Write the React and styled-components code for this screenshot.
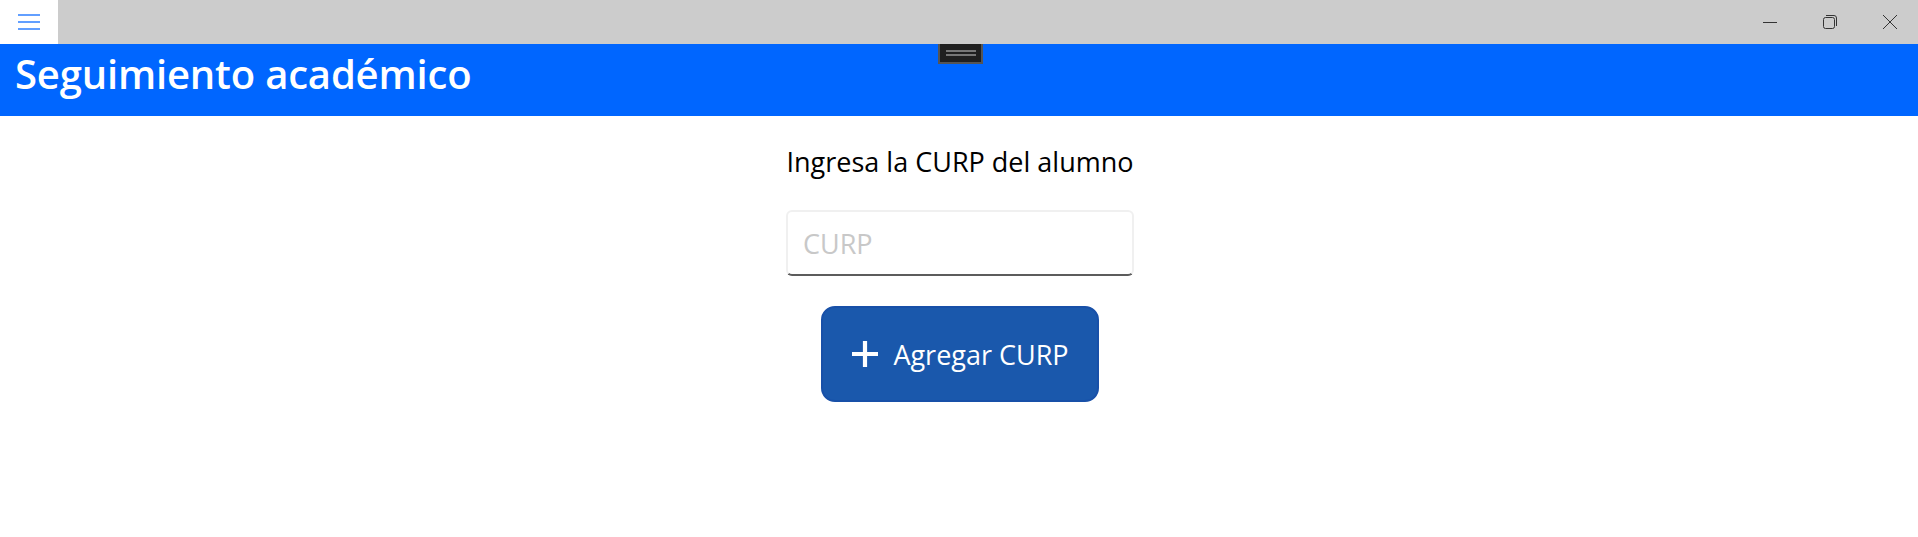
import React from "react";
import styled, { createGlobalStyle } from "styled-components";

const GlobalStyle = createGlobalStyle`
  html, body {
    margin: 0;
    padding: 0;
    background: #fff;
    font-family: "Open Sans", "Noto Sans", sans-serif;
  }
`;

export default function App() {
  return (
    <Page>
      <GlobalStyle />
      <TitleBar>
        <MenuButton aria-label="Menu">
          <svg width="22" height="16" viewBox="0 0 22 16">
            <path d="M0 1h22M0 8h22M0 15h22" stroke="#2f80ff" strokeWidth="1.5" fill="none" />
          </svg>
        </MenuButton>
        <WindowControls>
          <WindowButton aria-label="Minimizar">
            <svg width="16" height="16" viewBox="0 0 16 16">
              <path d="M1 8.5h14" stroke="#333" strokeWidth="1" fill="none" />
            </svg>
          </WindowButton>
          <WindowButton aria-label="Restaurar">
            <svg width="16" height="16" viewBox="0 0 16 16">
              <rect x="1.5" y="3.5" width="11" height="11" rx="2" stroke="#333" strokeWidth="1" fill="none" />
              <path d="M4 1.5h8a2.5 2.5 0 0 1 2.5 2.5v8" stroke="#333" strokeWidth="1" fill="none" />
            </svg>
          </WindowButton>
          <WindowButton aria-label="Cerrar">
            <svg width="16" height="16" viewBox="0 0 16 16">
              <path d="M1 1l14 14M15 1L1 15" stroke="#333" strokeWidth="1" fill="none" />
            </svg>
          </WindowButton>
        </WindowControls>
      </TitleBar>
      <Header>
        <Title>Seguimiento académico</Title>
        <DragHandle>
          <HandleLine />
          <HandleLine />
        </DragHandle>
      </Header>
      <Content>
        <Label>Ingresa la CURP del alumno</Label>
        <Input placeholder="CURP" />
        <AddButton>
          <svg width="28" height="28" viewBox="0 0 28 28">
            <path d="M14 1v26M1 14h26" stroke="#fff" strokeWidth="4.2" fill="none" />
          </svg>
          Agregar CURP
        </AddButton>
      </Content>
    </Page>
  );
}

const Page = styled.div`
  width: 100%;
  height: 537px;
  overflow: hidden;
  background: #fff;
`;
const TitleBar = styled.div`
  height: 44px;
  background: #cccccc;
  display: flex;
  justify-content: space-between;
  align-items: stretch;
`;
const MenuButton = styled.button`
  width: 58px;
  padding: 0;
  border: none;
  background: #fff;
  display: flex;
  align-items: center;
  justify-content: center;
`;
const WindowControls = styled.div`
  display: flex;
  margin-right: -2px;
`;
const WindowButton = styled.button`
  width: 60px;
  padding: 0;
  border: none;
  background: transparent;
  display: flex;
  align-items: center;
  justify-content: center;
`;
const Header = styled.header`
  position: relative;
  height: 72px;
  background: #0066ff;
  display: flex;
  align-items: center;
  padding-left: 15px;
`;
const Title = styled.h1`
  margin: 0 0 12px;
  color: #fff;
  font-size: 40px;
  font-weight: 600;
  line-height: 1;
  letter-spacing: -0.17px;
`;
const DragHandle = styled.div`
  position: absolute;
  top: 0;
  left: 938px;
  width: 45px;
  height: 20px;
  box-sizing: border-box;
  background: #202020;
  border: 2px solid #555;
  border-top: none;
  display: flex;
  flex-direction: column;
  align-items: center;
  justify-content: center;
  gap: 2px;
`;
const HandleLine = styled.div`
  width: 30px;
  height: 2px;
  background: #777;
`;
const Content = styled.main`
  display: flex;
  flex-direction: column;
  align-items: center;
  padding-top: 27px;
  padding-left: 2px;
`;
const Label = styled.div`
  color: #000;
  font-size: 27px;
  line-height: 37px;
  margin-bottom: 30px;
`;
const Input = styled.input`
  width: 348px;
  height: 66px;
  box-sizing: border-box;
  padding: 0 15px;
  background: #fff;
  border: 2px solid #f0f0f0;
  border-bottom: 2px solid #5c5c5c;
  border-radius: 6px;
  outline: none;
  font-family: inherit;
  font-size: 27px;
  color: #000;

  &::placeholder {
    color: #c8c8c8;
    opacity: 1;
  }
`;
const AddButton = styled.button`
  margin-top: 30px;
  width: 278px;
  height: 96px;
  box-sizing: border-box;
  background: #1a58ac;
  border: 2px solid #1850a8;
  border-radius: 14px;
  color: #fff;
  font-family: inherit;
  font-size: 27px;
  display: flex;
  align-items: center;
  justify-content: center;
  gap: 14px;
`;
